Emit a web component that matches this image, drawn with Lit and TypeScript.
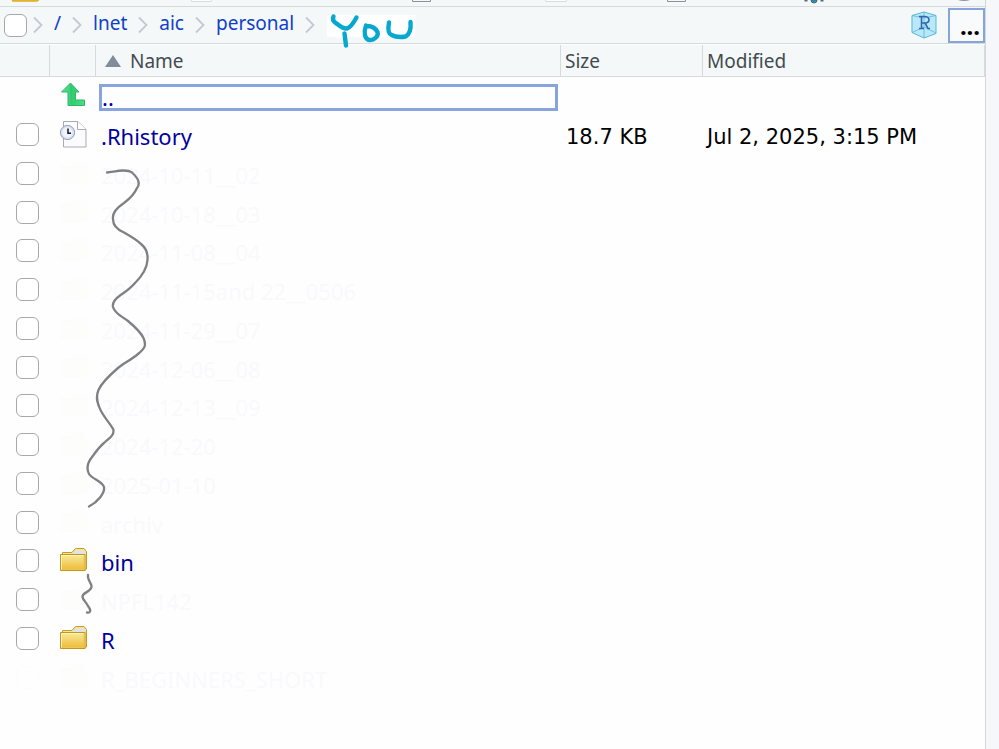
import { LitElement, html, css, svg } from "lit";
import { customElement, property } from "lit/decorators.js";
import { classMap } from "lit/directives/class-map.js";

interface Entry {
  name: string;
  kind: "up" | "history" | "folder";
  size?: string;
  modified?: string;
  faded?: boolean;
  hideBox?: boolean;
}

const faded = (name: string): Entry => ({ name, kind: "folder", faded: true });

const ENTRIES: Entry[] = [
  { name: "..", kind: "up" },
  { name: ".Rhistory", kind: "history", size: "18.7 KB", modified: "Jul 2, 2025, 3:15 PM" },
  faded("2024-10-11__02"),
  faded("2024-10-18__03"),
  faded("2024-11-08__04"),
  faded("2024-11-15and 22__0506"),
  faded("2024-11-29__07"),
  faded("2024-12-06__08"),
  faded("2024-12-13__09"),
  faded("2024-12-20"),
  faded("2025-01-10"),
  faded("archiv"),
  { name: "bin", kind: "folder" },
  faded("NPFL142"),
  { name: "R", kind: "folder" },
  { ...faded("R_BEGINNERS_SHORT"), hideBox: true },
];

const CRUMBS = ["/", "lnet", "aic", "personal"];

@customElement("file-icon")
class FileIcon extends LitElement {
  @property() kind = "folder";

  static styles = css`
    :host { display: block; width: 28px; height: 28px; }
    svg { display: block; }
  `;

  render() {
    const shapes = {
      folder: svg`
        <defs>
          <linearGradient id="front" x1="0" y1="0" x2="0" y2="1">
            <stop offset="0" stop-color="#f8eb9c"/><stop offset="1" stop-color="#eeb932"/>
          </linearGradient>
        </defs>
        <path d="M2.5 10V5.500h9.500l3-3.500q.5-.5 1.300-.5h7.700l2.500 3V22l-2 1.500z" fill="#f6e3a0" stroke="#c99b1c"/>
        <path d="M13 7l3-3.800h7.300L25 5v3H12z" fill="#dfe3e3"/>
        <path d="M.5 7.500h24.500v16H.5z" fill="url(#front)" stroke="#c4961a"/>
        <path d="M1.500 22.500V8.500H24" fill="none" stroke="#fbf3c4"/>
        <path d="M24 8.500v14H2" fill="none" stroke="#efc653"/>`,
      history: svg`
        <path d="M3.500.5h14.500l8 8v17.500H3.500z" fill="#fbfbfd" stroke="#a9abb0"/>
        <path d="M17.500.500v8h8.500" fill="#fff" stroke="#a9abb0"/>
        <circle cx="7.500" cy="11.500" r="7" fill="#eef2fa" stroke="#8492ae"/>
        <circle cx="7.500" cy="11.500" r="5.600" fill="none" stroke="#d5deee"/>
        <path d="M8 7.500v4.700h3" fill="none" stroke="#151922" stroke-width="1.500"/>`,
      up: svg`
        <defs>
          <linearGradient id="arrow" x1="0" y1="0" x2="1" y2="0">
            <stop offset="0" stop-color="#5ce093"/><stop offset=".5" stop-color="#34cd73"/><stop offset="1" stop-color="#4ade86"/>
          </linearGradient>
        </defs>
        <path d="M10.500 1L19 10h-3.500v8H24.500v5.500H8V10H1.500z" fill="url(#arrow)" stroke="#2aba65" stroke-linejoin="round"/>
        <path d="M11 2v20" stroke="#2fc26b"/>`,
    } as const;
    return html`<svg width="28" height="28" viewBox="0 0 28 28" aria-hidden="true">
      ${shapes[this.kind as keyof typeof shapes]}
    </svg>`;
  }
}

@customElement("app-root")
class AppRoot extends LitElement {
  static styles = css`
    :host {
      display: flex;
      min-height: 100vh;
      background: #f5f7fa;
      font-family: "Noto Sans", "Open Sans", sans-serif;
    }
    * { box-sizing: border-box; }
    .pane {
      flex: 1;
      min-width: 0;
      position: relative;
      background: #fefefe;
    }
    .gutter {
      width: 14px;
      border-left: 1px solid #d3d7d9;
      background: #f5f7fa;
    }
    .toolbar {
      height: 7px;
      overflow: hidden;
      background: #f4f8f9;
      border-bottom: 1px solid #d6dadc;
    }
    .toolbar svg { display: block; }
    .path {
      display: flex;
      align-items: center;
      height: 37px;
      padding-left: 4px;
      background: #f4f8f9;
      border-bottom: 1px solid #d6dadc;
      margin-bottom: 1px;
    }
    .crumbs { display: flex; align-items: center; }
    .crumbs a {
      color: #1040c8;
      font-size: 19px;
      line-height: 26px;
      text-decoration: none;
      padding-bottom: 4px;
    }
    .chevron { display: block; width: 10px; height: 18px; margin: 0 11px; }
    .chevron.first { margin-left: 6px; }
    .you { display: block; width: 90px; height: 44px; margin-top: 2px; }
    .spacer { flex: 1; }
    .project, .more {
      display: block;
      border: 0;
      padding: 0;
      background: none;
      font-family: inherit;
    }
    .project { width: 28px; height: 28px; margin-right: 10px; }
    .more {
      align-self: stretch;
      width: 37px;
      margin-top: 1px;
      padding: 1px 0 0 7px;
      border: 2px solid #87a5dc;
      background: #f8fafb;
      color: #000;
      font-size: 24px;
      font-weight: 700;
      line-height: 24px;
    }
    input[type="checkbox"] {
      appearance: none;
      display: block;
      width: 23px;
      height: 23px;
      margin: 0;
      border: 1px solid #a8a8a8;
      border-radius: 6px;
      background: #fff;
    }
    table {
      width: 100%;
      border-collapse: separate;
      border-spacing: 0;
      table-layout: fixed;
    }
    th, td { padding: 0; text-align: left; font-weight: 400; }
    th {
      height: 32px;
      background: #f4f8f9;
      border-right: 1px solid #d6dadc;
      border-bottom: 1px solid #d6dadc;
      color: #434b50;
      font-size: 19px;
      line-height: 26px;
      padding-left: 4px;
    }
    .c-box { width: 50px; }
    .c-icon { width: 46px; }
    .c-size { width: 142px; }
    .c-mod { width: 282px; }
    .sort { display: flex; align-items: center; gap: 9px; padding-left: 5px; }
    tbody tr { height: 39px; }
    tbody tr:nth-child(4n) { height: 38px; }
    td { color: #000; line-height: 26px; white-space: nowrap; }
    td.box { padding: 0 0 2px 16px; }
    td.icon { padding: 0 0 2px 10px; }
    td.name { padding: 2px 3px 0 3px; }
    td.size, td.mod { padding: 2px 0 0 4px; font-family: "DejaVu Sans", sans-serif; font-size: 21px; }
    td.size { padding-left: 5px; }
    .name a {
      display: block;
      padding-left: 2px;
      color: #0000a0;
      font-size: 22px;
      line-height: 27px;
      text-decoration: none;
    }
    .up .name a {
      padding-left: 0;
      border: 3px solid #87a5dc;
      line-height: 21px;
    }
    .faded td.name a { opacity: 0.016; }
    .faded td.icon file-icon { opacity: 0.008; }
    .nobox input { opacity: 0.01; }
    .scribble {
      position: absolute;
      left: 80px;
      top: 164px;
      pointer-events: none;
    }
  `;

  private chevron(first = false) {
    return html`<svg class=${classMap({ chevron: true, first })} viewBox="0 0 10 18" aria-hidden="true">
      <path d="M1 1.500l7.500 7.500L1 16.500" fill="none" stroke="#c3c9d4" stroke-width="1.800"/>
    </svg>`;
  }

  private toolbar() {
    return html`<div class="toolbar"><svg width="985" height="6" viewBox="0 0 985 6" aria-hidden="true">
      <path d="M12 0h27l-1.500 1.500H12.500z" fill="#eab92d" stroke="#d3a125" stroke-width=".5"/>
      <path d="M191.500 0v1.500h20V0M545.500 0v1.500h21V0" fill="#fdfdfd" stroke="#dadde0"/>
      <path d="M412.500 0v1.500h18V0M667.500 0v1.500h18V0" fill="#f6f7f9" stroke="#8d9098"/>
      <path d="M806 0v1.500M822 0v1.500" stroke="#5b6870" stroke-width="3"/>
      <path d="M811 0h6q0 3-3 3t-3-3" fill="#269cc0" stroke="#4a6470"/>
      <path d="M958 0h12q-6 2-12 0" fill="#8a90a4"/>
    </svg></div>`;
  }

  private row(e: Entry, i: number) {
    const id = `entry-${i}`;
    return html`<tr class=${classMap({ up: e.kind === "up", faded: !!e.faded, nobox: !!e.hideBox })}>
      <td class="box">${e.kind === "up" ? "" : html`<input type="checkbox" aria-labelledby=${id}>`}</td>
      <td class="icon"><file-icon kind=${e.kind}></file-icon></td>
      <td class="name"><a id=${id} href="#">${e.name}</a></td>
      <td class="size">${e.size ?? ""}</td>
      <td class="mod">${e.modified ?? ""}</td>
    </tr>`;
  }

  render() {
    return html`
      <main class="pane">
        ${this.toolbar()}
        <div class="path">
          <input type="checkbox" aria-label="Select all">
          <nav class="crumbs">
            ${CRUMBS.map((c, i) => html`${this.chevron(i === 0)}<a href="#">${c}</a>`)}
            ${this.chevron()}
            <svg class="you" viewBox="325 3 90 44" role="img" aria-label="YOU">
              <path d="M326 14h88v22h-88z" fill="#fff"/>
              <g fill="none" stroke="#06a8cf" stroke-width="4.400" stroke-linecap="round" stroke-linejoin="round">
                <path d="M332.500 15.500q-2 4 3 7 7 5.500 10.500 5 4-1 9.500-11M343.500 32.500l1.500 12"/>
                <path d="M365 24.500q-2 5-1 10 2 6 8 4 6-3 4.500-7.500-3-6-10.500-6"/>
                <path d="M388 21.500q-2 11 2.500 12.500 6 3 14 1.500 6-3 5-14.500"/>
              </g>
            </svg>
          </nav>
          <span class="spacer"></span>
          <button class="project" aria-label="Project folder">
            <svg width="28" height="28" viewBox="0 0 28 28" aria-hidden="true">
              <path d="M14 1l12 3.500v18L14 27 2 21.500V4.500z" fill="#b9e8fa" stroke="#57b9d4" stroke-linejoin="round"/>
              <path d="M2 4.500L14 7l12-2.500M14 7v20M2 21.500L14 16l12 6M14 1v6" fill="none" stroke="#57b9d4" stroke-width=".8"/>
              <path d="M9 5.500h6q4 .3 4 3.300t-4 3.200h-3.500M11.500 5.500v12M9 17.500h5M15 12l3 5.500H20" fill="none" stroke="#3565ab" stroke-width="1.600"/>
            </svg>
          </button>
          <button class="more" aria-label="Go to directory">...</button>
        </div>
        <table>
          <colgroup>
            <col class="c-box"><col class="c-icon"><col><col class="c-size"><col class="c-mod">
          </colgroup>
          <thead>
            <tr>
              <th></th>
              <th></th>
              <th><span class="sort">
                <svg width="16" height="12" viewBox="0 0 16 12" aria-hidden="true"><path d="M8 0l8 12H0z" fill="#818b99"/></svg>Name
              </span></th>
              <th>Size</th>
              <th>Modified</th>
            </tr>
          </thead>
          <tbody>${ENTRIES.map((e, i) => this.row(e, i))}</tbody>
        </table>
        <svg class="scribble" width="80" height="456" viewBox="80 164 80 456" aria-hidden="true">
          <g fill="none" stroke="#7f8083" stroke-width="2.300" stroke-linecap="round" stroke-linejoin="round">
            <path d="M107 172.500C114 172 126 168 132 172.500C137 177 141 183 137 188C134 195 128 200 124 203C118 207 112 213 113 219C113 226 118 230 124 232.500C132 237 138 241 141 244C146 248 148 254 147.500 260C147 269 141 277 135 283C130 289 125 292 120 295.500C115 299 112 302 113 307C115 314 123 317 128 321C134 326 141 333 143.500 338C147 346 144 349 138 354C131 360 124 363 118 368C111 374 102 382 98.500 390C95 398 98 405 101 411C106 420 112 426 113.500 430C114 436 109 438 104 443C99 447 95 453 92 457C88 462 86 468 89 474C92 479 102 481 104 487C105 493 98 502 89 506.500"/>
            <path d="M88 575C87 580 92 583 91.500 587C90 593 82 592 82.500 597C83 600 86 602 88 606C92 611 90 613 87 612.500"/>
          </g>
        </svg>
      </main>
      <aside class="gutter"></aside>
    `;
  }
}
